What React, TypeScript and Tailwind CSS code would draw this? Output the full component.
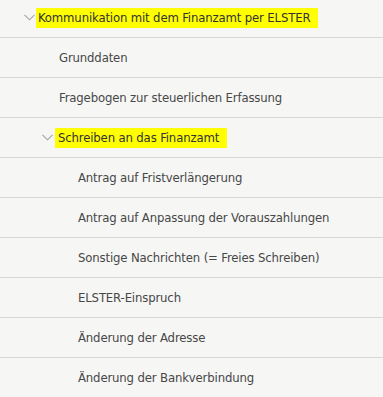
import React from "react";

type Item = { label: string; level: number; open?: boolean; highlight?: boolean };

const items: Item[] = [
  { label: "Kommunikation mit dem Finanzamt per ELSTER", level: 0, open: true, highlight: true },
  { label: "Grunddaten", level: 1 },
  { label: "Fragebogen zur steuerlichen Erfassung", level: 1 },
  { label: "Schreiben an das Finanzamt", level: 1, open: true, highlight: true },
  { label: "Antrag auf Fristverlängerung", level: 2 },
  { label: "Antrag auf Anpassung der Vorauszahlungen", level: 2 },
  { label: "Sonstige Nachrichten (= Freies Schreiben)", level: 2 },
  { label: "ELSTER-Einspruch", level: 2 },
  { label: "Änderung der Adresse", level: 2 },
  { label: "Änderung der Bankverbindung", level: 2 },
];

const padClass = ["pl-[24px]", "pl-[42px]", "pl-[78px]"];

function Chevron({ level }: { level: number }) {
  return (
    <svg
      width="11"
      height="7"
      viewBox="0 0 11 7"
      className={level === 0 ? "mr-[1px] shrink-0" : "mr-[2px] shrink-0"}
    >
      <polyline points="0.5,0.8 5.5,5.8 10.5,0.8" fill="none" stroke="#a3a3a3" strokeWidth="1.1" />
    </svg>
  );
}

export default function App() {
  return (
    <div
      className="w-[383px] h-[397px] overflow-hidden bg-[#f6f6f5] text-[#474747] text-[13px] tracking-[-0.15px]"
      style={{ fontFamily: '"DejaVu Sans Condensed", "DejaVu Sans", sans-serif' }}
    >
      <div className="-mt-[2px]">
        {items.map((it, i) => (
          <div
            key={i}
            className={`h-[40px] flex items-center border-b border-[#d9d9d9] ${padClass[it.level]}`}
          >
            {it.open && <Chevron level={it.level} />}
            {it.level === 1 && !it.open && <span className="w-[17px] shrink-0" />}
            <span
              className={
                it.highlight
                  ? it.level === 0
                    ? "bg-[#ffff00] text-[#333333] pl-[2px] pr-[8px] leading-[20px]"
                    : "bg-[#ffff00] text-[#333333] pl-[3px] pr-[8px] leading-[20px]"
                  : "leading-[20px]"
              }
            >
              {it.label}
            </span>
          </div>
        ))}
      </div>
    </div>
  );
}
